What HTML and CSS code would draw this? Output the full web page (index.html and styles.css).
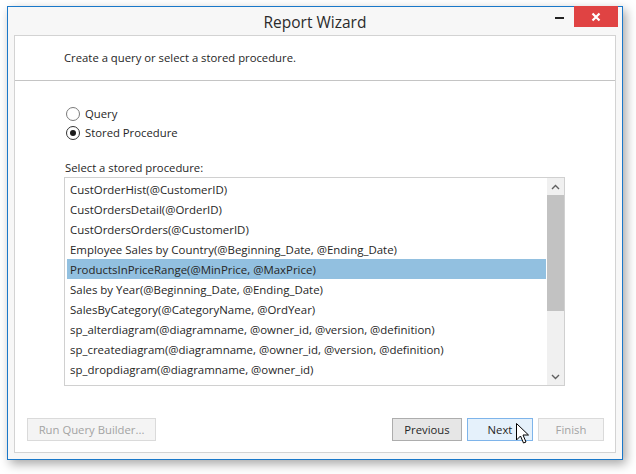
FILE: index.html
```html
<!DOCTYPE html>
<html>
<head>
<meta charset="utf-8">
<link rel="stylesheet" href="styles.css">
</head>
<body>
<div class="window">
  <div class="titlebar">
    <div class="title">Report Wizard</div>
    <div class="controls">
      <div class="minimize"></div>
      <div class="close">
        <svg width="10" height="10" viewBox="0 0 10 10"><path d="M1.5 1.5 L8.5 8.5 M8.5 1.5 L1.5 8.5" stroke="#fff" stroke-width="2.2" fill="none"/></svg>
      </div>
    </div>
  </div>
  <div class="panel">
    <div class="header">Create a query or select a stored procedure.</div>
    <div class="content">
      <div class="radios">
        <div class="radio-row"><span class="radio"></span><span>Query</span></div>
        <div class="radio-row"><span class="radio checked"></span><span>Stored Procedure</span></div>
      </div>
      <div class="list-label">Select a stored procedure:</div>
      <div class="listbox">
        <div class="items">
          <div class="item">CustOrderHist(@CustomerID)</div>
          <div class="item">CustOrdersDetail(@OrderID)</div>
          <div class="item">CustOrdersOrders(@CustomerID)</div>
          <div class="item">Employee Sales by Country(@Beginning_Date, @Ending_Date)</div>
          <div class="item selected">ProductsInPriceRange(@MinPrice, @MaxPrice)</div>
          <div class="item">Sales by Year(@Beginning_Date, @Ending_Date)</div>
          <div class="item">SalesByCategory(@CategoryName, @OrdYear)</div>
          <div class="item">sp_alterdiagram(@diagramname, @owner_id, @version, @definition)</div>
          <div class="item">sp_creatediagram(@diagramname, @owner_id, @version, @definition)</div>
          <div class="item">sp_dropdiagram(@diagramname, @owner_id)</div>
        </div>
        <div class="scrollbar">
          <div class="sb-btn">
            <svg width="9" height="6" viewBox="0 0 9 6"><path d="M1 5 L4.5 1.5 L8 5" stroke="#606060" stroke-width="1.4" fill="none"/></svg>
          </div>
          <div class="sb-thumb"></div>
          <div class="sb-track"></div>
          <div class="sb-btn">
            <svg width="9" height="6" viewBox="0 0 9 6"><path d="M1 1 L4.5 4.5 L8 1" stroke="#606060" stroke-width="1.4" fill="none"/></svg>
          </div>
        </div>
      </div>
      <div class="buttons">
        <div class="btn disabled wide">Run Query Builder...</div>
        <div class="btn-group">
          <div class="btn">Previous</div>
          <div class="btn hover">Next</div>
          <div class="btn disabled">Finish</div>
        </div>
      </div>
    </div>
  </div>
</div>
<svg class="cursor" width="14" height="22" viewBox="0 0 14 22">
  <path d="M0.5 0.5 L0.5 17 L4.5 13 L7.5 20 L10 19 L7 12 L12.5 12 Z" fill="#fff" stroke="#000" stroke-width="1" stroke-linejoin="miter"/>
</svg>
</body>
</html>
```
FILE: styles.css
```css
html, body {
  margin: 0;
  padding: 0;
  background: #ffffff;
}
body {
  font-family: "Open Sans", "Noto Sans", sans-serif;
  font-size: 11.3px;
  color: #262626;
  width: 636px;
  height: 474px;
  position: relative;
  overflow: hidden;
}
.window {
  position: absolute;
  left: 7px;
  top: 6px;
  width: 614px;
  height: 452px;
  border: 1px solid #1a78c9;
  background: #f7f7f7;
  box-shadow: 3px 4px 10px rgba(0,0,0,0.35);
  display: flex;
  flex-direction: column;
}
.titlebar {
  height: 28px;
  position: relative;
  display: flex;
  align-items: center;
  justify-content: center;
}
.title {
  font-size: 15.5px;
  color: #2b2b2b;
  margin-top: 2px;
}
.controls {
  position: absolute;
  right: 4px;
  top: -1px;
  display: flex;
  align-items: center;
}
.minimize {
  width: 9px;
  height: 2px;
  background: #222;
  margin-right: 10px;
  margin-top: 2px;
}
.close {
  width: 44px;
  height: 21px;
  background: #e04343;
  display: flex;
  align-items: center;
  justify-content: center;
}
.panel {
  flex: 1;
  margin: 0 6px 6px 6px;
  border: 1px solid #d3d3d3;
  background: #fff;
  display: flex;
  flex-direction: column;
}
.header {
  height: 44px;
  border-bottom: 1px solid #c4c4c4;
  padding-left: 49px;
  line-height: 44px;
}
.content {
  flex: 1;
  display: flex;
  flex-direction: column;
  padding: 23px 11px 11px 49px;
}
.radios {
  padding-left: 2px;
}
.radio-row {
  height: 19px;
  display: flex;
  align-items: center;
}
.radio {
  width: 12px;
  height: 12px;
  border: 1px solid #7a7a7a;
  border-radius: 50%;
  margin-right: 5px;
  background: #fff;
  position: relative;
  box-sizing: content-box;
}
.radio.checked {
  border-color: #333;
}
.radio.checked::after {
  content: "";
  position: absolute;
  left: 3px;
  top: 3px;
  width: 6px;
  height: 6px;
  border-radius: 50%;
  background: #1a1a1a;
}
.list-label {
  margin-top: 18px;
  height: 16px;
  line-height: 16px;
  padding-left: 1px;
}
.listbox {
  margin-top: 1px;
  width: 499px;
  height: 207px;
  border: 1px solid #d0d0d0;
  display: flex;
}
.items {
  flex: 1;
  padding: 1px 1px 0 2px;
  overflow: hidden;
  font-size: 11.45px;
}
.item {
  height: 20px;
  line-height: 21px;
  padding-left: 3px;
  white-space: nowrap;
}
.item.selected {
  background: #92c0e0;
}
.scrollbar {
  width: 17px;
  background: #f0f0f0;
  display: flex;
  flex-direction: column;
}
.sb-btn {
  height: 17px;
  display: flex;
  align-items: center;
  justify-content: center;
}
.sb-thumb {
  height: 116px;
  background: #c2c2c2;
}
.sb-track {
  flex: 1;
}
.buttons {
  margin-top: auto;
  margin-left: -37px;
  display: flex;
  justify-content: space-between;
}
.btn-group {
  display: flex;
  gap: 5px;
}
.btn {
  height: 21px;
  width: 64px;
  border: 1px solid #adadad;
  background: #e6e6e6;
  display: flex;
  align-items: center;
  justify-content: center;
  color: #262626;
}
.btn-group .btn:first-child {
  width: 68px;
}
.btn.hover {
  background: #e5f1fb;
  border-color: #7eb4ea;
}
.btn.disabled {
  background: #f4f4f4;
  border-color: #dadada;
  color: #a3a3a3;
}
.btn.wide {
  width: 127px;
}
.cursor {
  position: absolute;
  left: 516px;
  top: 423px;
}
```
